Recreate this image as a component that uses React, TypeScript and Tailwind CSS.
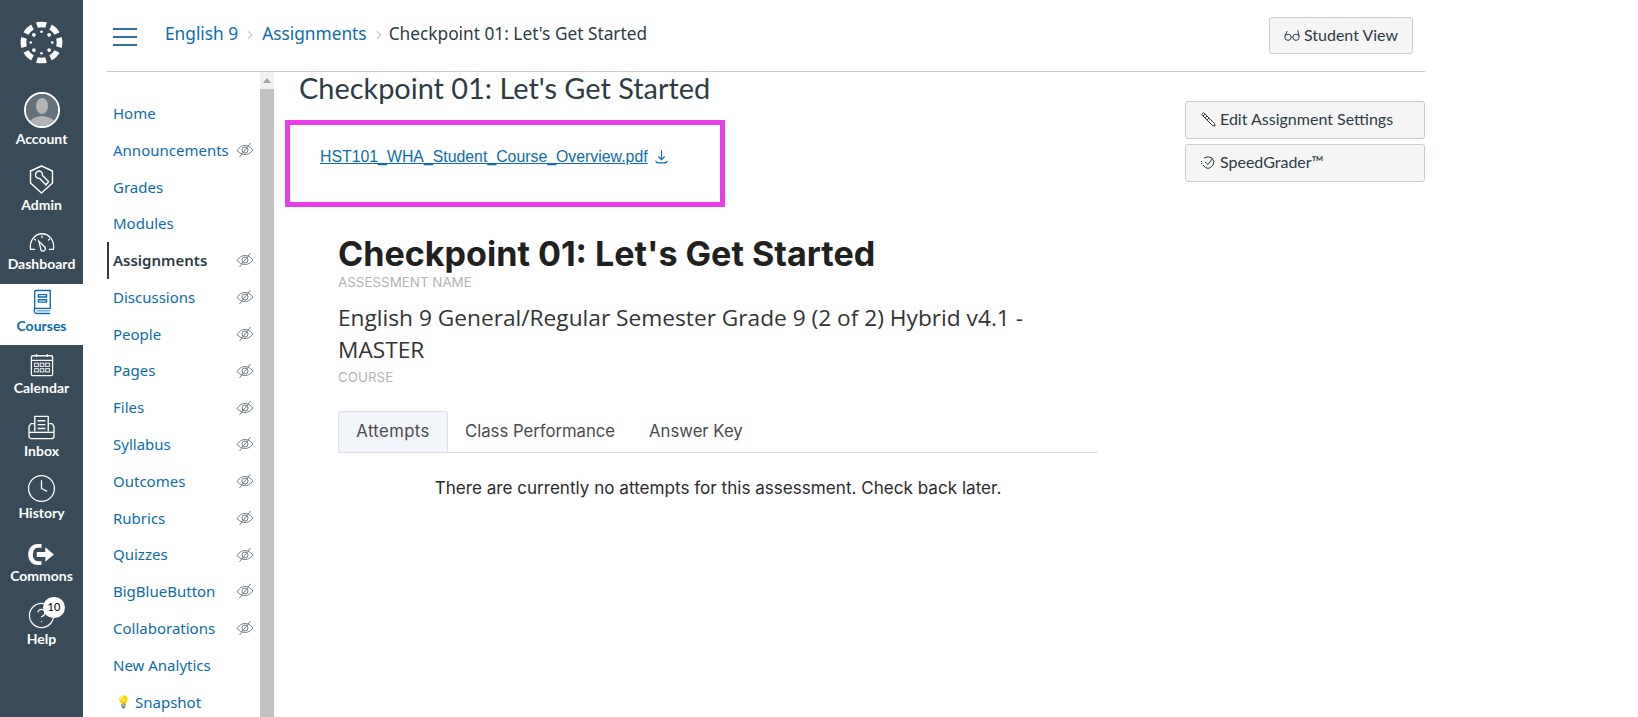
import { ChevronRight, Clock4, HelpCircle } from "lucide-react";

const courseLinks = [
  { label: "Home", hidden: false },
  { label: "Announcements", hidden: true },
  { label: "Grades", hidden: false },
  { label: "Modules", hidden: false },
  { label: "Assignments", hidden: true, active: true },
  { label: "Discussions", hidden: true },
  { label: "People", hidden: true },
  { label: "Pages", hidden: true },
  { label: "Files", hidden: true },
  { label: "Syllabus", hidden: true },
  { label: "Outcomes", hidden: true },
  { label: "Rubrics", hidden: true },
  { label: "Quizzes", hidden: true },
  { label: "BigBlueButton", hidden: true },
  { label: "Collaborations", hidden: true },
  { label: "New Analytics", hidden: false },
];

const CanvasLogo = () => {
  const wedges = [0, 45, 90, 135, 180, 225, 270, 315];
  return (
    <svg viewBox="0 0 44 44" className="w-[43px] h-[43px]" fill="white">
      {wedges.map((a) => (
        <g key={a} transform={`rotate(${a} 22 22)`}>
          <path d="M16.4 1.4 A21.5 21.5 0 0 1 27.6 1.4 L25.8 7 Q22 6 18.2 7 Z" />
          <circle cx="22" cy="11" r={a % 90 === 0 ? 1.4 : 1.9} />
        </g>
      ))}
    </svg>
  );
};

const Avatar = () => (
  <div className="w-9 h-9 rounded-full border-2 border-white overflow-hidden flex justify-center">
    <svg viewBox="0 0 32 32" className="w-full h-full">
      <rect width="32" height="32" fill="#66727b" />
      <ellipse cx="16" cy="12" rx="6" ry="8" fill="#b3b3b3" />
      <path d="M2 32 Q3 23 16 22 Q29 23 30 32 Z" fill="#b3b3b3" />
    </svg>
  </div>
);

const AdminIcon = () => (
  <svg viewBox="4 2 24 29" className="w-[25px] h-[29px]" fill="none" stroke="white" strokeWidth="1.4" strokeLinejoin="round">
    <path d="M16 3 L27 8 V20 L16 30 L5 20 V8 Z" />
    <path d="M10 11.5 a3.6 3.6 0 0 1 6 -2.6 a3.6 3.6 0 0 1 0.8 3.4 L23 18.5 L20.5 22 L14.2 15.4 a3.6 3.6 0 0 1 -4.2 -3.9 Z" />
  </svg>
);

const DashboardIcon = () => (
  <svg viewBox="0 0 32 24" className="w-[30px] h-[22px]" fill="none" stroke="white" strokeWidth="1.4" strokeLinecap="round">
    <path d="M8 20 H3.5 C2 11 8 3 16 3 C24 3 30 11 28.5 20 H24" />
    <path d="M12.5 11 L19 17.5 A2.6 2.6 0 0 1 15 21 Z" />
    <path d="M16 5.5 V7 M8 9 L9 10 M24 9 L23 10" />
  </svg>
);

const CoursesIcon = () => (
  <svg viewBox="0 0 24 28" className="w-[22px] h-[26px]" fill="none" stroke="#0e6ca8" strokeWidth="1.5" strokeLinejoin="round">
    <path d="M4 22 V3 a1.5 1.5 0 0 1 1.5 -1.5 H21 V21 H5.5 A2.5 2.5 0 0 0 4 25 a2.2 2.2 0 0 0 2 1.5 H21" />
    <rect x="8" y="6" width="9" height="2.6" />
    <rect x="8" y="11.5" width="9" height="2.6" />
    <path d="M6 23.5 H21" stroke="#7ab3d6" strokeWidth="2" />
  </svg>
);

const CalendarIcon = () => (
  <svg viewBox="0 0 26 26" className="w-6 h-6" fill="none" stroke="white" strokeWidth="1.4">
    <rect x="1.5" y="3" width="23" height="21.5" rx="1.5" />
    <path d="M1.5 8 H24.5 M7 1 V4 M19 1 V4" />
    <g strokeWidth="1">
      <rect x="5" y="11" width="4" height="3.5" />
      <rect x="11" y="11" width="4" height="3.5" />
      <rect x="17" y="11" width="4" height="3.5" />
      <rect x="5" y="17" width="4" height="3.5" />
      <rect x="11" y="17" width="4" height="3.5" />
      <rect x="17" y="17" width="4" height="3.5" />
    </g>
  </svg>
);

const InboxIcon = () => (
  <svg viewBox="0 0 28 26" className="w-[27px] h-[25px]" fill="none" stroke="white" strokeWidth="1.4" strokeLinejoin="round">
    <path d="M7 17 V1.5 H21 V17" />
    <path d="M10 6 H18 M10 10 H18 M10 14 H18" />
    <path d="M7 9 H3 L1 12 V22 a2.5 2.5 0 0 0 2.5 2.5 H24.5 A2.5 2.5 0 0 0 27 22 V12 L25 9 H21" />
    <path d="M1 18 H27" />
  </svg>
);

const CommonsIcon = () => (
  <svg viewBox="0 0 28 22" className="w-[27px] h-[21px]" fill="white">
    <path d="M10 0 H14 V4 H10 C7.5 4 5 6.5 5 11 C5 15.5 7.5 18 10 18 H14 V22 H10 C4 22 0 17 0 11 C0 5 4 0 10 0 Z" />
    <path d="M9 8.5 H18 V3.5 L27 11 L18 18.5 V13.5 H9 Z" />
  </svg>
);

const EyeOff = () => (
  <svg viewBox="0 0 18 16" className="w-[18px] h-4 shrink-0" fill="none" stroke="#73818c" strokeWidth="1">
    <path d="M1 8.5 C4 4.5 6.5 3.5 9 3.5 C11.5 3.5 14 4.5 17 8 C14 11.5 11.5 12.5 9 12.5 C6.5 12.5 4 11.5 1 8.5 Z" />
    <circle cx="9" cy="8" r="3" />
    <path d="M14.5 1 L3.5 15" />
  </svg>
);

const NavItem = ({ label, icon, active, tall }: { label: string; icon: React.ReactNode; active?: boolean; tall?: string }) => (
  <div className={`flex flex-col items-center justify-end w-full font-['Lato',sans-serif] text-[14px] font-bold leading-4 ${tall} ${active ? "bg-white text-[#0e6ca8]" : "text-white"}`}>
    {icon}
    <span className="mt-[3px]">{label}</span>
  </div>
);

export default function App() {
  return (
    <div className="flex h-[717px] w-[1638px] overflow-hidden bg-white font-['Lato',sans-serif]">
      {/* Global nav */}
      <aside className="w-[83px] shrink-0 bg-[#394b58] flex flex-col items-center pt-[21px]">
        <CanvasLogo />
        <NavItem label="Account" icon={<Avatar />} tall="h-[83px]" />
        <NavItem label="Admin" icon={<AdminIcon />} tall="h-[66px]" />
        <NavItem label="Dashboard" icon={<DashboardIcon />} tall="h-[71px] pb-[12px]" />
        <NavItem label="Courses" icon={<CoursesIcon />} active tall="h-[61px] pb-[11px]" />
        <NavItem label="Calendar" icon={<CalendarIcon />} tall="h-[51px]" />
        <NavItem label="Inbox" icon={<InboxIcon />} tall="h-[63px]" />
        <NavItem label="History" icon={<Clock4 className="w-[31px] h-[31px] -mb-[2px]" strokeWidth={1} />} tall="h-[62px]" />
        <NavItem label="Commons" icon={<CommonsIcon />} tall="h-[63px]" />
        <div className="relative w-full">
          <NavItem label="Help" icon={<HelpCircle className="w-[29px] h-[29px] -mb-[2px]" strokeWidth={1} />} tall="h-[63px]" />
          <span className="absolute right-[18px] top-[13px] w-[22px] h-[21px] rounded-full bg-white text-black text-[11px] flex items-center justify-center">10</span>
        </div>
      </aside>

      <div className="w-[1342px] pl-6 shrink-0 flex flex-col">
        {/* Breadcrumb bar */}
        <header className="h-[72px] shrink-0 border-b border-[#c7cdd1] flex items-start">
          <div className="flex flex-col gap-[6.5px] w-6 ml-[6px] mt-[28px]">
            <span className="h-[1.5px] bg-[#2d6f9e]" />
            <span className="h-[1.5px] bg-[#2d6f9e]" />
            <span className="h-[1.5px] bg-[#2d6f9e]" />
          </div>
          <nav className="ml-[29px] mt-[23px] flex items-center text-[17.3px] leading-[22px] font-['Noto_Sans',sans-serif]">
            <span className="text-[#0e6ca8] -ml-px">English 9</span>
            <ChevronRight className="w-[14px] h-[14px] mx-[5px] mt-[2px] text-[#73818c]" strokeWidth={1.2} />
            <span className="text-[#0e6ca8]">Assignments</span>
            <ChevronRight className="w-[14px] h-[14px] ml-[5px] mr-[3px] mt-[2px] text-[#73818c]" strokeWidth={1.2} />
            <span className="text-[#2d3b45]">Checkpoint 01: Let's Get Started</span>
          </nav>
          <button className="ml-auto mr-[12px] mt-[17px] h-[37px] w-[144px] pb-[1px] flex items-center justify-center gap-1 rounded-[3px] border border-[#c7cdd1] bg-[#f5f5f5] text-[#2d3b45] text-[16px]">
            <svg viewBox="0 0 18 14" className="w-[16px] h-[13px]" fill="none" stroke="#2d3b45" strokeWidth="1.1">
              <circle cx="4.5" cy="9" r="3.5" />
              <circle cx="13.5" cy="9" r="3.5" />
              <path d="M8 9 Q9 8 10 9 M1 8 L3.5 2 M17 8 L15.5 1" />
            </svg>
            Student View
          </button>
        </header>

        <div className="flex flex-1 min-h-0">
          {/* Course nav */}
          <nav className="w-[153px] shrink-0 pt-[23px] overflow-hidden">
            {courseLinks.map((link) => (
              <div
                key={link.label}
                className={`h-[36.78px] flex items-center justify-between pl-[4px] pr-[6px] text-[15px] font-['Noto_Sans',sans-serif] border-l-2 ${
                  link.active ? "border-[#2d3b45] font-semibold text-[#2d3b45]" : "border-transparent text-[#0e6ca8]"
                }`}
              >
                <span className="whitespace-nowrap">{link.label}</span>
                {link.hidden && <EyeOff />}
              </div>
            ))}
            <div className="h-[37px] flex items-center pl-[9px] text-[15px] text-[#0e6ca8] font-['Noto_Sans',sans-serif] whitespace-nowrap">
              <span className="text-[12px] mr-1">💡</span>Snapshot
            </div>
          </nav>

          {/* Scrollbar */}
          <div className="w-[14px] shrink-0 bg-[#f1f1f1] flex flex-col items-center">
            <div className="h-[17px] shrink-0 flex items-center justify-center">
              <div className="w-0 h-0 border-x-[4px] border-x-transparent border-b-[5px] border-b-[#a3a3a3]" />
            </div>
            <div className="flex-1 w-full bg-[#c1c1c1]" />
          </div>

          {/* Main */}
          <main className="flex-1 min-w-0 pl-[11px]">
            <h1 className="ml-[14px] text-[28.9px] leading-[34px] -mt-px text-[#2d3b45] mb-[15px]">Checkpoint 01: Let's Get Started</h1>
            <div className="flex">
              <div className="flex-1 min-w-0">
                <div className="w-[440px] h-[87px] border-[5px] border-[#e83ee8] pl-[30px] pt-[19px]">
                  <a className="text-[15.85px] underline text-[#0e6ca8] font-['Liberation_Sans',sans-serif] inline-flex items-center gap-[5px]">
                    HST101_WHA_Student_Course_Overview.pdf
                    <svg viewBox="0 0 16 16" className="w-[17px] h-[17px]" fill="none" stroke="#0e6ca8" strokeWidth="1">
                      <path d="M8 2 V11 M5 8 L8 11 L11 8 M2.5 12 Q3 14 5 14 H11 Q13 14 13.5 12" />
                    </svg>
                  </a>
                </div>
                <div className="ml-[53px] w-[760px] mt-[27px]">
                  <h2 className="text-[34.1px] leading-[40px] font-bold text-[#202020] font-['Inter',sans-serif]">Checkpoint 01: Let's Get Started</h2>
                  <div className="text-[13.4px] leading-4 text-[#b5b5b5] font-['Inter',sans-serif]">ASSESSMENT NAME</div>
                  <p className="mt-[11.5px] w-[700px] text-[22.7px] leading-[32px] text-[#333] font-['Open_Sans',sans-serif]">
                    English 9 General/Regular Semester Grade 9 (2 of 2) Hybrid v4.1 - MASTER
                  </p>
                  <div className="text-[13.4px] leading-4 mt-[3.5px] text-[#b5b5b5] font-['Inter',sans-serif]">COURSE</div>
                  <div className="mt-[26px] flex border-b border-[#dcdfe2] text-[16.7px] text-[#4a4a4a] font-['Inter',sans-serif]">
                    <span className="w-[110px] h-[41px] justify-center flex items-center border border-b-0 border-[#dcdfe2] rounded-t-[3px] bg-[#f1f5f9] -mb-px tracking-[0.4px]">Attempts</span>
                    <span className="h-[41px] px-[17px] flex items-center">Class Performance</span>
                    <span className="h-[41px] px-[17px] flex items-center">Answer Key</span>
                  </div>
                  <p className="mt-[22px] text-center text-[17.1px] text-[#2b2b2b] font-['Inter',sans-serif]">
                    There are currently no attempts for this assessment. Check back later.
                  </p>
                </div>
              </div>
              <div className="w-[240px] shrink-0 -mt-[19px] flex flex-col gap-[5px]">
                <button className="h-[38px] px-[14px] pb-[2px] flex items-center gap-1 rounded-[3px] border border-[#c7cdd1] bg-[#f5f5f5] text-[#2d3b45] text-[16px]">
                  <svg viewBox="0 0 16 16" className="w-4 h-4" fill="none" stroke="#2d3b45" strokeWidth="1">
                    <path d="M1.5 3.5 L3.5 1.5 L14.5 12.5 L15 15 L12.5 14.5 Z M3 5 L5 3 M5 7 L7 5 M7 9 L9 7" />
                  </svg>
                  Edit Assignment Settings
                </button>
                <button className="h-[38px] px-[14px] pb-[2px] flex items-center gap-1 rounded-[3px] border border-[#c7cdd1] bg-[#f5f5f5] text-[#2d3b45] text-[16px]">
                  <svg viewBox="0 0 16 16" className="w-4 h-4" fill="none" stroke="#2d3b45" strokeWidth="1">
                    <path d="M4 4 Q8 1.5 12 4 Q15 7 13 11 Q11 14 8 14.5 Q5 14 3 11 M5 8 L8 10.5 L12 5" />
                    <path d="M1.5 7 L1.5 10" strokeDasharray="1 1" />
                  </svg>
                  SpeedGrader™
                </button>
              </div>
            </div>
          </main>
        </div>
      </div>
    </div>
  );
}
